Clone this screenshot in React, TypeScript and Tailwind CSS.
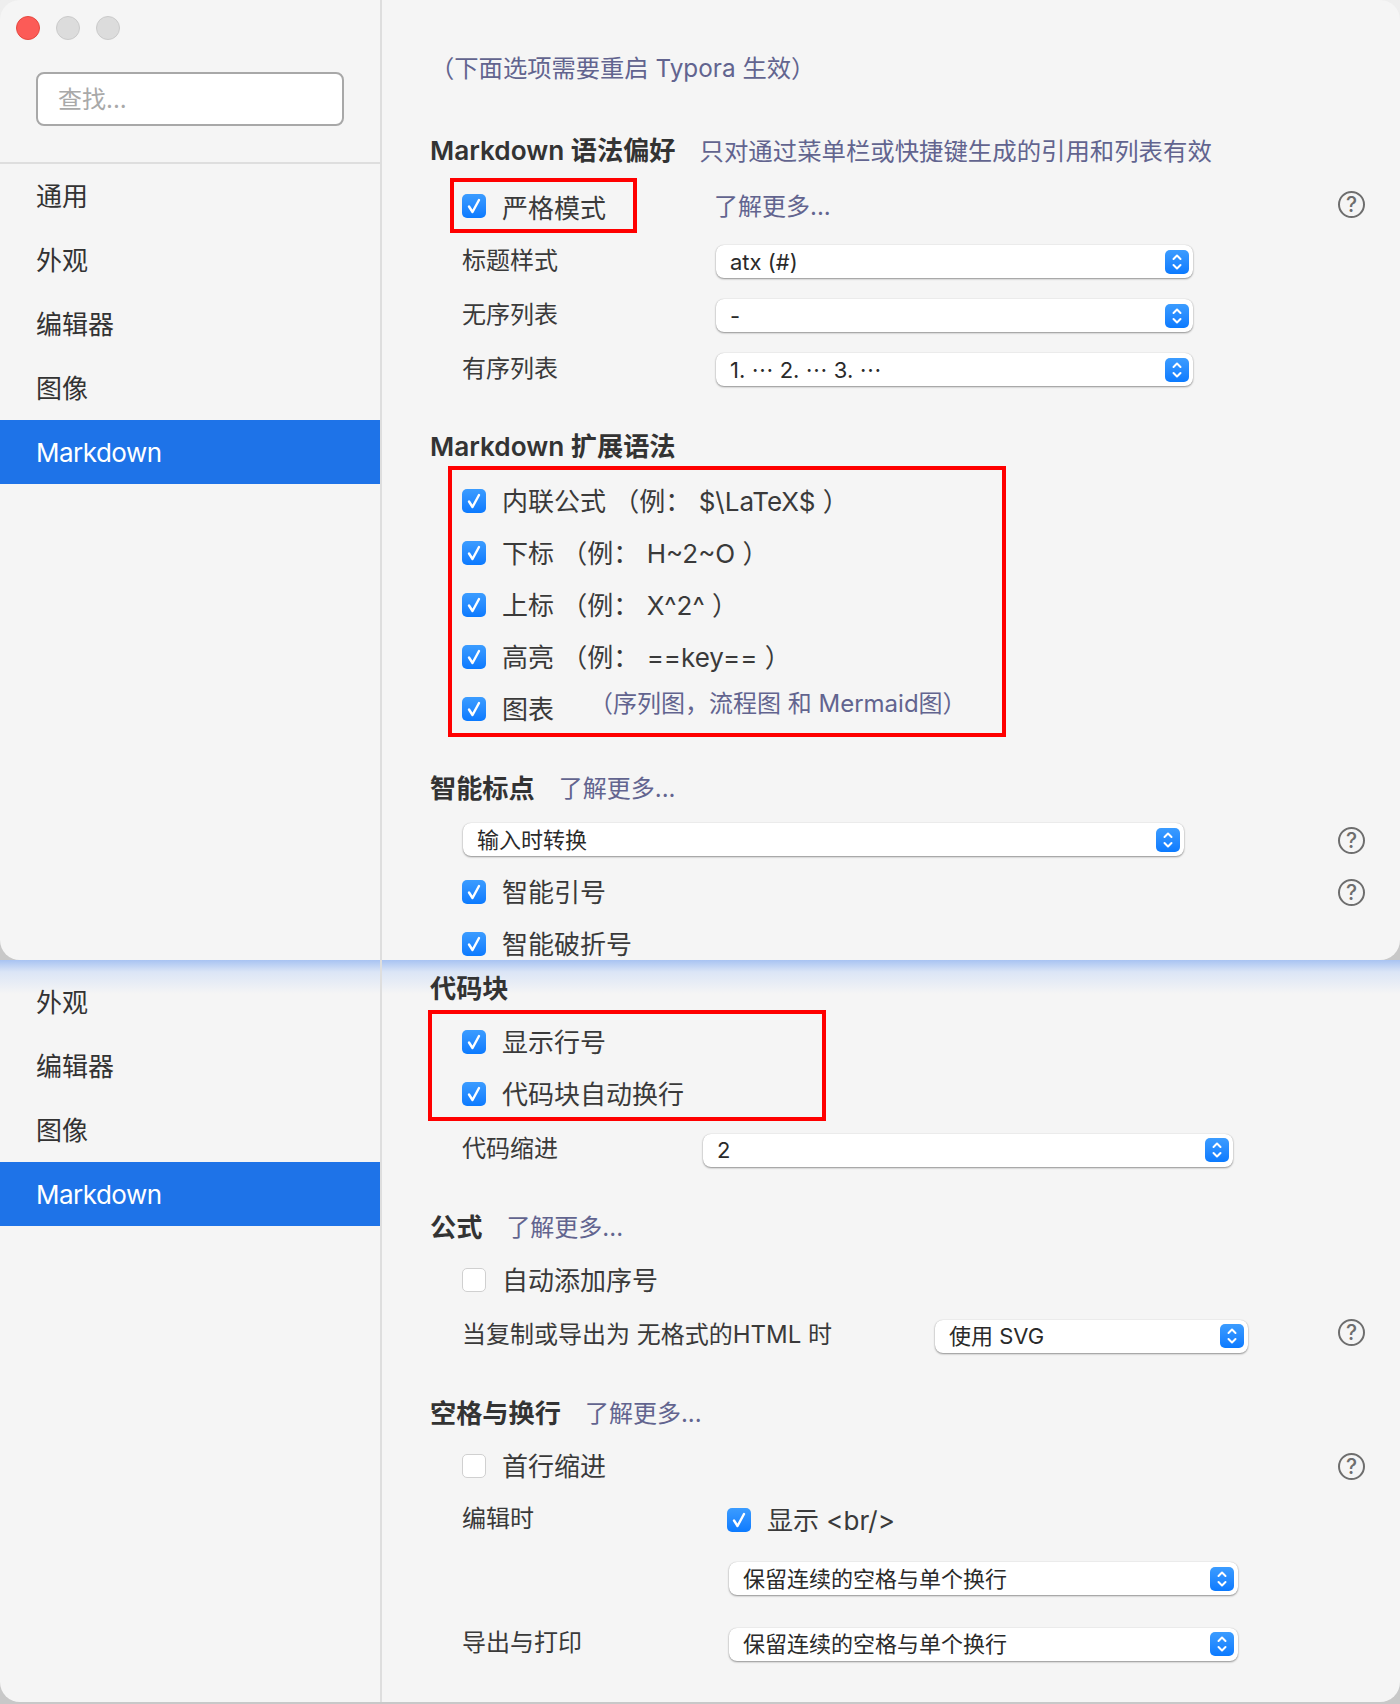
import React from 'react';

const Check = ({ on = true }: { on?: boolean }) =>
  on ? (
    <span className="w-6 h-6 shrink-0 rounded-[5px] bg-gradient-to-b from-[#3b9cff] to-[#0a7aff] flex items-center justify-center">
      <svg width="16" height="18" viewBox="0 0 16 18" fill="none">
        <path d="M3 9.5 L6.5 15 L13 3" stroke="#fff" strokeWidth="2.4" strokeLinecap="round" strokeLinejoin="round" />
      </svg>
    </span>
  ) : (
    <span className="w-6 h-6 shrink-0 rounded-[5px] bg-white border border-[#d0d0d0]"></span>
  );

const Help = ({ className = '' }: { className?: string }) => (
  <span className={`ml-auto w-[27px] h-[27px] shrink-0 rounded-full border-2 border-[#6e6e6e] flex items-center justify-center text-[21px] font-medium leading-none text-[#6e6e6e] ${className}`}>
    ?
  </span>
);

const Select = ({ value, className }: { value: string; className: string }) => (
  <div className={`h-[33px] shrink-0 rounded-[8px] bg-white shadow-[0_1px_2px_rgba(0,0,0,0.4),0_0_1px_rgba(0,0,0,0.2)] flex items-center justify-between pl-[14px] pr-1 text-[22px] text-[#2a2a2a] ${className}`}>
    <span className="pt-[1px]">{value}</span>
    <span className="w-6 h-6 rounded-[5px] bg-gradient-to-b from-[#3b9cff] to-[#0a7aff] flex items-center justify-center">
      <svg width="12" height="18" viewBox="0 0 12 18" fill="none">
        <path d="M2.5 6 L6 2.5 L9.5 6 M2.5 12 L6 15.5 L9.5 12" stroke="#fff" strokeWidth="2" strokeLinecap="round" strokeLinejoin="round" />
      </svg>
    </span>
  </div>
);

const Heading = ({ title, className = '', children }: { title: string; className?: string; children?: React.ReactNode }) => (
  <div className={`h-[38px] -ml-[1px] flex items-center text-[26.2px] font-semibold text-[#333] shrink-0 ${className}`}>
    <span>{title}</span>
    {children}
  </div>
);

const Link = ({ text, className = '' }: { text: string; className?: string }) => (
  <span className={`text-[24px] font-normal text-[#62648f] ${className}`}>{text}</span>
);

const CheckRow = ({ label, on = true, children, className = '' }: { label: string; on?: boolean; children?: React.ReactNode; className?: string }) => (
  <div className={`h-11 flex items-center shrink-0 text-[26px] text-[#3a3a3a] ${className}`}>
    <Check on={on} />
    <span className="ml-4">{label}</span>
    {children}
  </div>
);

const Label = ({ text, className = '' }: { text: string; className?: string }) => (
  <span className={`text-[24px] pb-[2px] text-[#3a3a3a] ${className}`}>{text}</span>
);

const Item = ({ text, active = false }: { text: string; active?: boolean }) => (
  <div className={`h-16 flex items-center pl-9 text-[26px] ${active ? 'bg-[#1e73e8] text-white tracking-[-0.02em]' : 'text-[#333]'}`}>{text}</div>
);

const Traffic = () => (
  <div className="h-[56px] flex items-center gap-4 pl-4">
    <span className="w-6 h-6 rounded-full bg-[#fc5b57] border border-[#e5483f]"></span>
    <span className="w-6 h-6 rounded-full bg-[#dcdcdc] border border-[#cacaca]"></span>
    <span className="w-6 h-6 rounded-full bg-[#dcdcdc] border border-[#cacaca]"></span>
  </div>
);

export default function App() {
  return (
    <div className="w-[1400px] h-[1704px] bg-gradient-to-b from-[#eeeeee] from-[5%] to-[#c8c8c8] to-[50%] overflow-hidden font-['Inter','Noto_Sans_CJK_SC',sans-serif]">
      {/* Top window */}
      <div className="relative z-10 h-[960px] flex rounded-[20px] overflow-hidden bg-[#f5f5f5]">
        <aside className="w-[382px] shrink-0 border-r-2 border-[#dedede]">
          <Traffic />
          <div className="h-[108px] border-b-2 border-[#dedede] pt-4 pl-[36px]">
            <div className="w-[308px] h-[54px] rounded-[8px] border-2 border-[#a8a8a8] bg-white flex items-center pl-[20px] pt-[2px] text-[24px] text-[#a9a9a9]">查找...</div>
          </div>
          <Item text="通用" />
          <Item text="外观" />
          <Item text="编辑器" />
          <Item text="图像" />
          <Item text="Markdown" active />
        </aside>
        <main className="flex-1 flex flex-col pl-[49px] pr-[35px]">
          <div className="mt-[48px] -ml-[1px] h-10 flex items-center shrink-0">
            <span className="text-[24.3px] text-[#62648f]">（下面选项需要重启 Typora 生效）</span>
          </div>
          <Heading title="Markdown 语法偏好" className="mt-[44px]">
            <span className="ml-6 text-[24.4px] font-normal text-[#62648f]">只对通过菜单栏或快捷键生成的引用和列表有效</span>
          </Heading>
          <div className="mt-[8px] flex items-center shrink-0">
            <div className="ml-[19px] w-[187px] h-[55px] border-4 border-[#ff0000] flex items-center pl-2 text-[26px] text-[#3a3a3a]">
              <Check />
              <span className="ml-4 pt-[5px]">严格模式</span>
            </div>
            <Link text="了解更多..." className="ml-[77px] pt-[2px]" />
            <Help className="mb-[2px]" />
          </div>
          {[
            ['标题样式', 'atx (#)'],
            ['无序列表', '-'],
            ['有序列表', '1. ⋯ 2. ⋯ 3. ⋯'],
          ].map(([label, value], i) => (
            <div key={label} className={`h-[33px] flex items-center shrink-0 ml-[31px] ${i === 0 ? 'mt-3' : 'mt-[21px]'}`}>
              <Label text={label} className="w-[254px]" />
              <Select value={value} className="w-[477px]" />
            </div>
          ))}
          <Heading title="Markdown 扩展语法" className="mt-[42px]" />
          <div className="ml-[17px] w-[558px] h-[271px] shrink-0 border-4 border-[#ff0000] pt-[9px] pl-[10px] flex flex-col gap-2">
            <CheckRow label="内联公式 （例： $\LaTeX$ ）" />
            <CheckRow label="下标 （例： H~2~O ）" />
            <CheckRow label="上标 （例： X^2^ ）" />
            <CheckRow label="高亮 （例： ==key== ）" />
            <CheckRow label="图表">
              <span className="ml-[35px] pb-[10px] text-[24px] text-[#62648f]">（序列图，流程图 和 Mermaid图）</span>
            </CheckRow>
          </div>
          <Heading title="智能标点" className="mt-[33px]">
            <Link text="了解更多..." className="ml-6" />
          </Heading>
          <div className="mt-[15px] flex items-center shrink-0 ml-[32px]">
            <Select value="输入时转换" className="w-[721px]" />
            <Help className="mt-[2px]" />
          </div>
          <div className="mt-[14px] flex items-center shrink-0 ml-[31px]">
            <CheckRow label="智能引号" />
            <Help />
          </div>
          <CheckRow label="智能破折号" className="ml-[31px] mt-[8px]" />
        </main>
      </div>

      {/* Bottom window */}
      <div className="relative h-[742px] flex rounded-b-[20px] overflow-hidden bg-[#f5f5f5]">
        <div className="absolute left-0 right-0 top-0 h-[34px] bg-gradient-to-b from-[#a8c3f2] via-[#dbe5f6] via-[35%] to-[#f5f5f5]/0"></div>
        <aside className="relative w-[382px] shrink-0 border-r-2 border-[#dedede] pt-[10px]">
          <Item text="外观" />
          <Item text="编辑器" />
          <Item text="图像" />
          <Item text="Markdown" active />
        </aside>
        <main className="relative flex-1 flex flex-col pl-[49px] pr-[35px] pt-[10px]">
          <Heading title="代码块" />
          <div className="mt-[2px] -ml-[3px] w-[398px] h-[111px] shrink-0 border-4 border-[#ff0000] pt-[6px] pl-[30px] flex flex-col gap-2">
            <CheckRow label="显示行号" />
            <CheckRow label="代码块自动换行" />
          </div>
          <div className="mt-[10px] ml-[31px] flex items-center shrink-0">
            <Label text="代码缩进" className="w-[241px]" />
            <Select value="2" className="w-[530px]" />
          </div>
          <Heading title="公式" className="mt-[40px]">
            <Link text="了解更多..." className="ml-6" />
          </Heading>
          <CheckRow label="自动添加序号" on={false} className="mt-[11px] ml-[31px]" />
          <div className="mt-[15px] ml-[31px] flex items-center shrink-0">
            <Label text="当复制或导出为 无格式的HTML 时" className="w-[473px]" />
            <Select value="使用 SVG" className="w-[313px]" />
            <Help className="mb-[8px]" />
          </div>
          <Heading title="空格与换行" className="mt-[40px]">
            <Link text="了解更多..." className="ml-6" />
          </Heading>
          <div className="mt-[11px] ml-[31px] flex items-center shrink-0">
            <CheckRow label="首行缩进" on={false} />
            <Help />
          </div>
          <div className="mt-[10px] ml-[31px] flex items-center shrink-0">
            <Label text="编辑时" className="w-[265px]" />
            <CheckRow label="显示 <br/>" />
          </div>
          <Select value="保留连续的空格与单个换行" className="mt-5 ml-[298px] w-[509px]" />
          <div className="mt-[30px] ml-[31px] flex items-center shrink-0">
            <Label text="导出与打印" className="w-[267px]" />
            <Select value="保留连续的空格与单个换行" className="w-[509px]" />
          </div>
        </main>
      </div>
    </div>
  );
}
